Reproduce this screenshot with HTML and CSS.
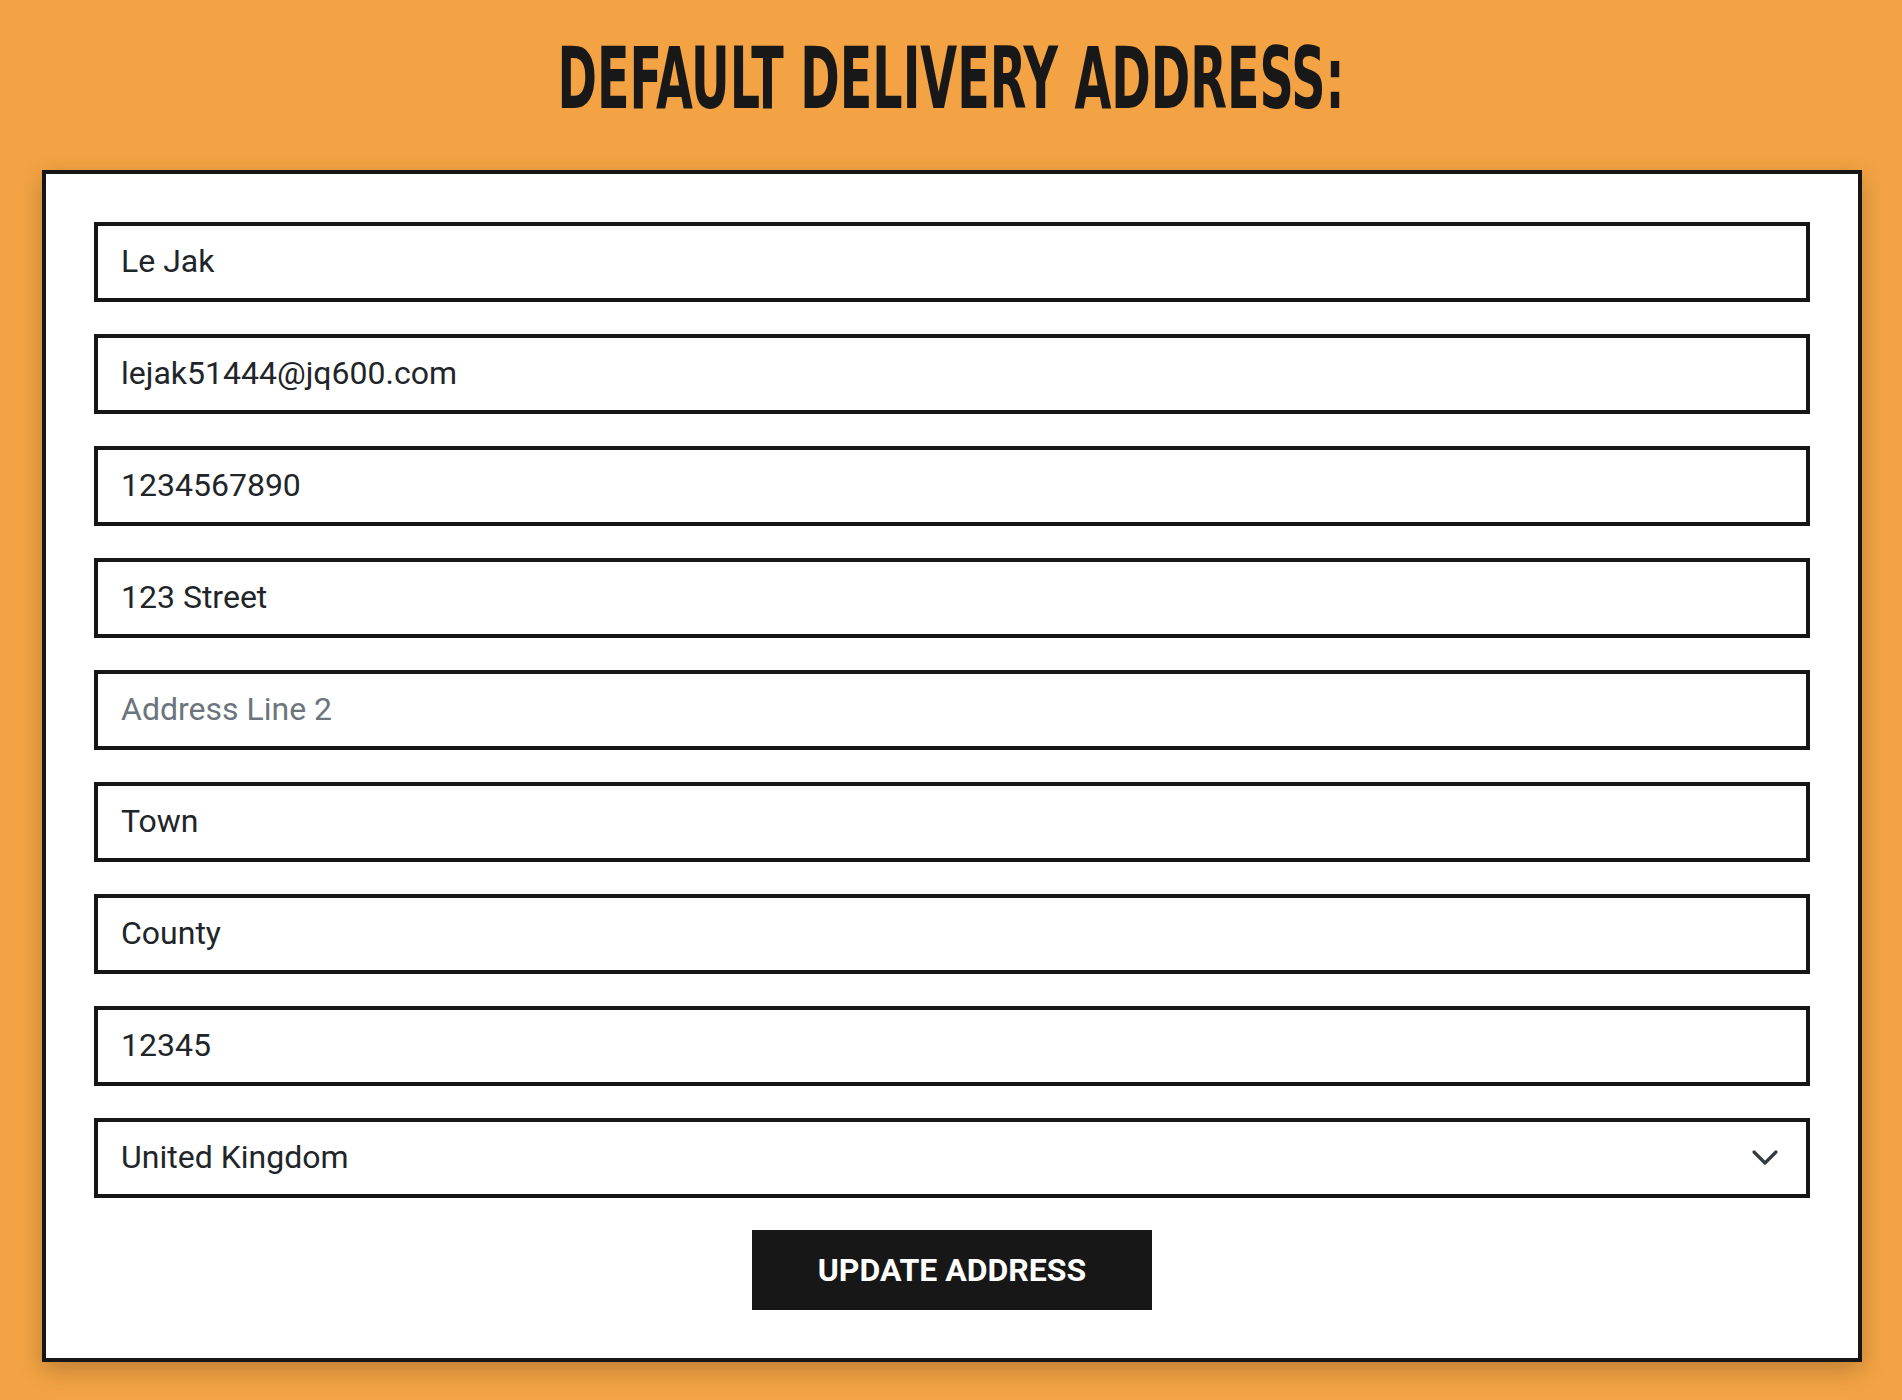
FILE: index.html
```html
<!DOCTYPE html>
<html lang="en">
<head>
<meta charset="utf-8">
<title>Default Delivery Address</title>
<link rel="stylesheet" href="styles.css">
</head>
<body>
<main class="page">
  <h1 class="title"><span class="title-text">DEFAULT DELIVERY ADDRESS:</span></h1>
  <form class="card">
    <input class="field" type="text" value="Le Jak">
    <input class="field" type="email" value="lejak51444@jq600.com">
    <input class="field" type="tel" value="1234567890">
    <input class="field" type="text" value="123 Street">
    <input class="field" type="text" placeholder="Address Line 2">
    <input class="field" type="text" value="Town">
    <input class="field" type="text" value="County">
    <input class="field" type="text" value="12345">
    <div class="select-wrap">
      <select class="field select">
        <option>United Kingdom</option>
      </select>
      <svg class="chevron" viewBox="0 0 16 16" width="32" height="32" aria-hidden="true">
        <path d="M2.5 5.5l5.5 5.5 5.5-5.5" fill="none" stroke="#343a40" stroke-width="1.6" stroke-linecap="round" stroke-linejoin="round"/>
      </svg>
    </div>
    <div class="actions">
      <button class="btn" type="button">UPDATE ADDRESS</button>
    </div>
  </form>
</main>
</body>
</html>
```
FILE: styles.css
```css
html, body {
  margin: 0;
  padding: 0;
}
body {
  background: #f3a343;
  font-family: Roboto, "Liberation Sans", Arial, sans-serif;
  height: 1400px;
  overflow: hidden;
}
.page {
  padding-top: 30px;
}
.title {
  margin: 0;
  height: 140px;
  text-align: center;
  font-family: "DejaVu Sans", sans-serif;
  font-weight: 700;
  font-stretch: condensed;
  font-size: 86px;
  line-height: 96px;
  color: #181818;
}
.title-text {
  display: inline-block;
  transform: scaleX(0.615);
  transform-origin: center;
  white-space: nowrap;
}
.card {
  box-sizing: border-box;
  margin-left: 42px;
  width: 1820px;
  background: #fff;
  border: 4px solid #161616;
  padding: 48px;
  display: flex;
  flex-direction: column;
  gap: 32px;
  box-shadow: 0 8px 22px rgba(0, 0, 0, 0.22);
}
.field {
  box-sizing: border-box;
  width: 100%;
  height: 80px;
  border: 4px solid #161616;
  border-radius: 0;
  padding: 0 23px 2px;
  margin: 0;
  font-family: Roboto, "Liberation Sans", Arial, sans-serif;
  font-size: 32px;
  color: #212529;
  background: #fff;
  outline: none;
}
.field::placeholder {
  color: #6c757d;
  opacity: 1;
}
.select-wrap {
  position: relative;
}
.select {
  appearance: none;
  -webkit-appearance: none;
}
.chevron {
  position: absolute;
  right: 29px;
  top: 23px;
  pointer-events: none;
}
.actions {
  display: flex;
  justify-content: center;
}
.btn {
  width: 400px;
  height: 80px;
  border: none;
  border-radius: 0;
  background: #171717;
  color: #fff;
  font-family: Roboto, "Liberation Sans", Arial, sans-serif;
  font-weight: 700;
  font-size: 32px;
  cursor: pointer;
}
```
